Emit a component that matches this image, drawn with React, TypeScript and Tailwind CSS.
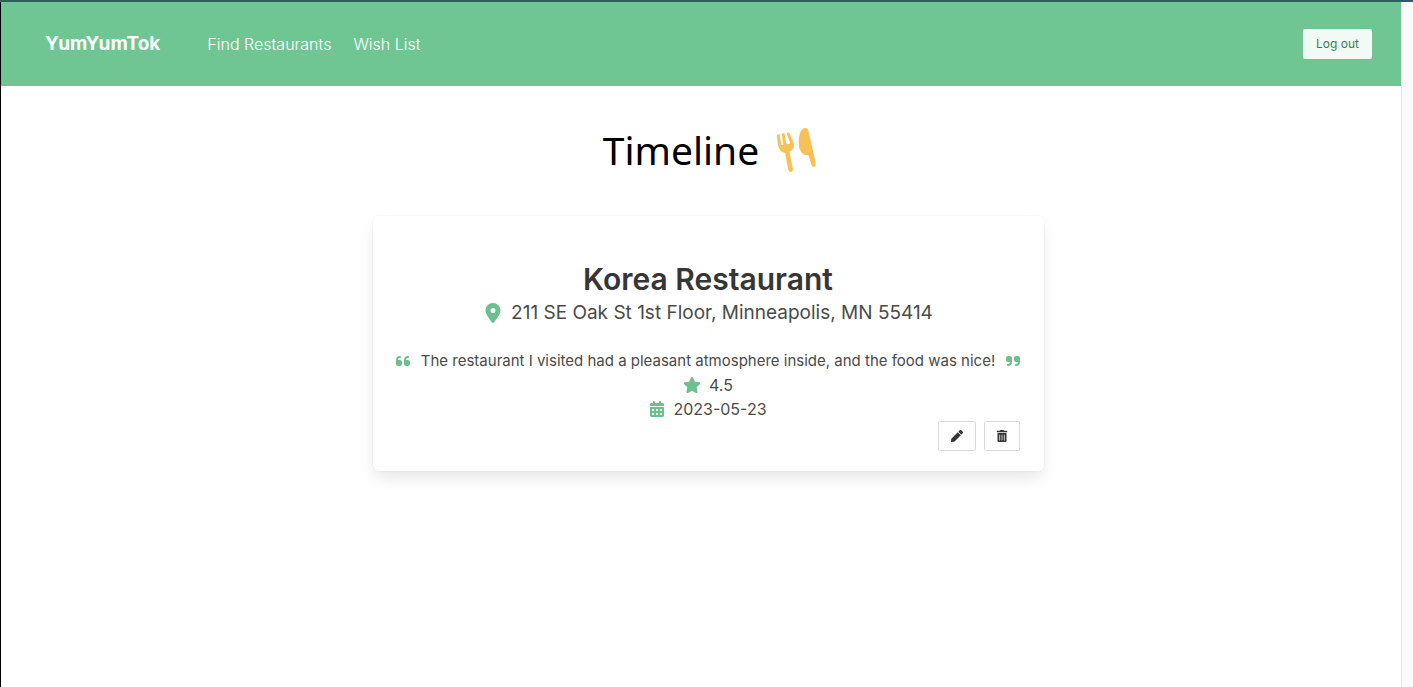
import { FaPen, FaTrashAlt } from "react-icons/fa";
import {
  FaCalendarDays,
  FaLocationDot,
  FaQuoteLeft,
  FaQuoteRight,
  FaStar,
} from "react-icons/fa6";

function NavBar() {
  return (
    <nav className="flex h-21 items-center bg-[#70c693] pr-[29px] pl-11 text-white">
      <a href="#home" className="text-[19px] leading-7 font-bold">
        YumYumTok
      </a>
      <div className="ml-[47px] flex gap-[22px] text-base font-light">
        <a href="#find">Find Restaurants</a>
        <a href="#wish">Wish List</a>
      </div>
      <button
        type="button"
        className="ml-auto h-[30px] rounded-xs bg-[#f1faf5] px-[13px] text-xs text-[#3a7d57]"
      >
        Log out
      </button>
    </nav>
  );
}

function Cutlery() {
  return (
    <svg viewBox="15 18 132 144" className="h-12 w-11" fill="#f6c157" aria-hidden="true">
      <g stroke="#f6c157" strokeLinecap="round" fill="none">
        <path d="M25 47l5 32M40 44l5 32M55 42l12 32" strokeWidth="9" />
        <path d="M50 88l12 61" strokeWidth="14" />
        <path d="M118 92l13 42" strokeWidth="13" />
      </g>
      <path d="M22 62L26 80C29 93 38 98 48 98C62 97 73 87 72 76L67 56L58 72L50 73L46 64L40 75L32 76Z" />
      <path d="M104 24C109 23 114 26 115 31L137 128L125 134L119 105C106 108 97 103 92 94C86 83 85 69 87 53C89 38 95 26 104 24Z" />
    </svg>
  );
}

function ReviewCard() {
  return (
    <article className="flex w-[671px] flex-col items-center rounded-md bg-white pt-[45px] pb-5 text-[#4a4a4a] shadow-[0_8px_16px_-2px_rgba(10,10,10,0.1),0_0_0_1px_rgba(10,10,10,0.02)]">
      <h2 className="text-[30px] leading-9 font-semibold text-[#363636]">Korea Restaurant</h2>
      <p className="flex items-center gap-2 text-[19px] leading-8">
        <FaLocationDot className="size-5 text-[#6cc08e]" />
        211 SE Oak St 1st Floor, Minneapolis, MN 55414
      </p>
      <div className="mt-5 flex flex-col items-center text-base leading-6">
        <p className="flex items-center gap-2.5 text-[15px] leading-6">
          <FaQuoteLeft className="size-4 text-[#6cc08e]" />
          The restaurant I visited had a pleasant atmosphere inside, and the food was nice!
          <FaQuoteRight className="size-4 text-[#6cc08e]" />
        </p>
        <p className="flex items-center gap-2">
          <FaStar className="h-4 w-[18px] text-[#6cc08e]" />
          4.5
        </p>
        <p className="flex items-center gap-2">
          <FaCalendarDays className="size-4 text-[#6cc08e]" />
          2023-05-23
        </p>
      </div>
      <div className="flex gap-2 self-end pr-6 text-[#363636]">
        <button
          type="button"
          aria-label="Edit"
          className="flex h-[30px] w-[38px] items-center justify-center rounded-xs border border-[#dbdbdb]"
        >
          <FaPen className="size-3" />
        </button>
        <button
          type="button"
          aria-label="Delete"
          className="flex h-[30px] w-9 items-center justify-center rounded-xs border border-[#dbdbdb]"
        >
          <FaTrashAlt className="size-3" />
        </button>
      </div>
    </article>
  );
}

export default function App() {
  return (
    <div className="flex min-h-screen flex-col border-t-2 border-[#2d5d69] bg-white font-['Inter',sans-serif]">
      <div className="flex grow">
        <div className="grow border-l border-black">
          <NavBar />
          <main className="flex flex-col items-center pl-3.5">
            <h1 className="mt-[34px] flex items-center gap-4 pl-1.5 font-['Noto_Sans',sans-serif] text-[39px] leading-15 text-black">
              Timeline
              <Cutlery />
            </h1>
            <div className="mt-9">
              <ReviewCard />
            </div>
          </main>
        </div>
        <div className="w-3 border-l border-[#e6e6e6] bg-[#fafafa]" />
      </div>
    </div>
  );
}
